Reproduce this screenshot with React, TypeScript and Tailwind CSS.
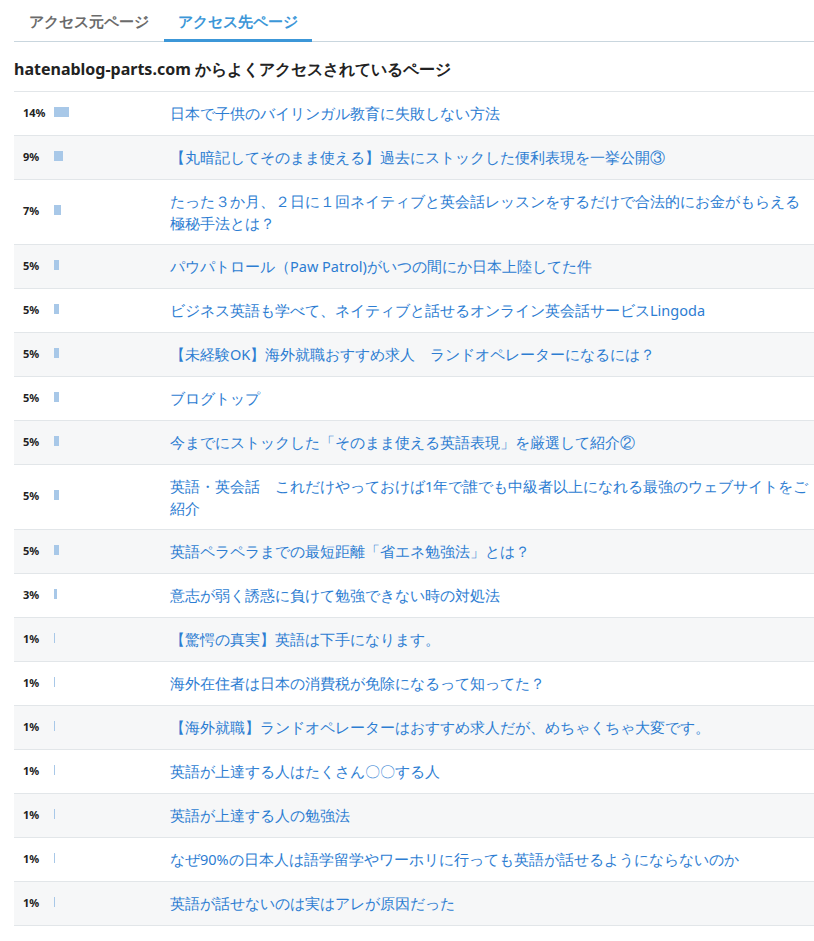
const rows: [number, string][] = [
  [14, "日本で子供のバイリンガル教育に失敗しない方法"],
  [9, "【丸暗記してそのまま使える】過去にストックした便利表現を一挙公開③"],
  [7, "たった３か月、２日に１回ネイティブと英会話レッスンをするだけで合法的にお金がもらえる極秘手法とは？"],
  [5, "パウパトロール（Paw Patrol)がいつの間にか日本上陸してた件"],
  [5, "ビジネス英語も学べて、ネイティブと話せるオンライン英会話サービスLingoda"],
  [5, "【未経験OK】海外就職おすすめ求人　ランドオペレーターになるには？"],
  [5, "ブログトップ"],
  [5, "今までにストックした「そのまま使える英語表現」を厳選して紹介②"],
  [5, "英語・英会話　これだけやっておけば1年で誰でも中級者以上になれる最強のウェブサイトをご紹介"],
  [5, "英語ペラペラまでの最短距離「省エネ勉強法」とは？"],
  [3, "意志が弱く誘惑に負けて勉強できない時の対処法"],
  [1, "【驚愕の真実】英語は下手になります。"],
  [1, "海外在住者は日本の消費税が免除になるって知ってた？"],
  [1, "【海外就職】ランドオペレーターはおすすめ求人だが、めちゃくちゃ大変です。"],
  [1, "英語が上達する人はたくさん〇〇する人"],
  [1, "英語が上達する人の勉強法"],
  [1, "なぜ90%の日本人は語学留学やワーホリに行っても英語が話せるようにならないのか"],
  [1, "英語が話せないのは実はアレが原因だった"],
]

const barWidth = (p: number) => (p === 14 ? 15 : p === 9 ? 9 : p === 7 ? 7 : p === 5 ? 5 : p === 3 ? 3 : 1)

export default function App() {
  return (
    <div className="min-h-[941px] bg-white pl-[14px] font-['Noto_Sans_CJK_JP','Noto_Sans',sans-serif] text-[14.5px] text-[#222]">
      <div className="flex border-b border-[#c9d6de] text-[15px] font-bold">
        <div className="px-[15px] pt-[10px] pb-[8px] text-[#6b6b6b]">アクセス元ページ</div>
        <div className="-mb-px border-b-[3px] border-[#3c97d8] px-[14px] pt-[10px] pb-[5px] text-[#3c97d8]">
          アクセス先ページ
        </div>
      </div>
      <h2 className="pt-[15px] pb-[10px] text-[16px] font-bold text-[#222]">
        hatenablog-parts.com からよくアクセスされているページ
      </h2>
      <div className="border-t border-[#e2e6e9]">
        {rows.map(([p, t], i) => (
          <div
            key={i}
            className={`flex min-h-[44px] items-center border-b border-[#e2e6e9] ${i % 2 ? "bg-[#f6f7f8]" : "bg-white"}`}
          >
            <div className="flex w-[156px] shrink-0 items-center pl-[9px]">
              <span className="w-[31px] text-[11px] font-bold text-[#222]">{p}%</span>
              <span className="mb-[3px] h-[10px] bg-[#a8c8e8]" style={{ width: barWidth(p) }} />
            </div>
            <a className="py-[10px] pr-[4px] leading-[22px] text-[#2d7dd2]">{t}</a>
          </div>
        ))}
      </div>
    </div>
  )
}
